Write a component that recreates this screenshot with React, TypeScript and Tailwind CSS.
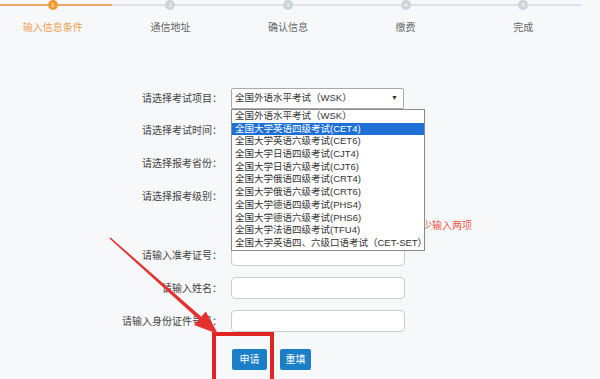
const font = { fontFamily: '"Liberation Sans", "Noto Sans CJK SC", sans-serif' };

const steps = ["输入信息条件", "通信地址", "确认信息", "缴费", "完成"];

const options = [
  "全国外语水平考试（WSK）",
  "全国大学英语四级考试(CET4)",
  "全国大学英语六级考试(CET6)",
  "全国大学日语四级考试(CJT4)",
  "全国大学日语六级考试(CJT6)",
  "全国大学俄语四级考试(CRT4)",
  "全国大学俄语六级考试(CRT6)",
  "全国大学德语四级考试(PHS4)",
  "全国大学德语六级考试(PHS6)",
  "全国大学法语四级考试(TFU4)",
  "全国大学英语四、六级口语考试（CET-SET）",
];

const Stepper = () => {
  return (
    <div className="-ml-[6px] w-[588px]">
      <div className="grid grid-cols-5">
        {steps.map((s, i) => (
          <div key={s} className="flex flex-col items-center">
            <div className="flex h-[10px] w-full items-center">
              <div className={`h-[1.5px] flex-1 ${i === 0 ? "bg-[#e9a868]" : "bg-[#dfe3e8]"}`} />
              <div
                className={`flex h-[10px] w-[10px] items-center justify-center rounded-full text-[6px] leading-none text-white ${
                  i === 0 ? "bg-[#f29a2e]" : "bg-[#cdd2d8]"
                }`}
              >
                {i + 1}
              </div>
              <div className={`h-[1.5px] flex-1 ${i === 0 ? "bg-[#e9a868]" : "bg-[#dfe3e8]"}`} />
            </div>
            <div className={`mt-[12px] text-[10px] leading-[12px] ${i === 0 ? "text-[#f0a050]" : "text-[#666]"}`}>
              {s}
            </div>
          </div>
        ))}
      </div>
    </div>
  );
};

const Label = ({ children }: { children: string }) => (
  <div className="w-[222px] shrink-0 text-right text-[10px] text-[#444]">{children}</div>
);

const Input = () => (
  <div className="ml-[9px] h-[22px] w-[174px] rounded-[4px] border border-[#c8ccd0] bg-white" />
);

const SelectBox = ({ text }: { text: string }) => (
  <div className="ml-[9px] flex h-[21px] w-[173px] items-center justify-between rounded-[2px] border border-[#a9a9a9] bg-white pl-[3px] pr-[5px] text-[9.5px] text-[#333]">
    <span>{text}</span>
    <span className="text-[7px]">▼</span>
  </div>
);

export default function App() {
  return (
    <div className="relative h-[379px] w-[600px] overflow-hidden bg-[#f6f8fa]" style={font}>
      <Stepper />

      <div className="mt-[54px] flex flex-col">
        {/* 考试项目 */}
        <div className="flex h-[21px] items-center">
          <Label>请选择考试项目：</Label>
          <div className="relative z-10">
            <SelectBox text="全国外语水平考试（WSK）" />
            <div className="absolute left-[9px] top-[21px] w-[194px] border border-[#8a8a8a] bg-white">
              {options.map((o, i) => (
                <div
                  key={o}
                  className={`h-[12.7px] pl-[3px] text-[9.5px] leading-[12.7px] whitespace-nowrap ${
                    i === 1 ? "bg-[#1e6fd6] text-white" : "text-[#333]"
                  }`}
                >
                  {o}
                </div>
              ))}
            </div>
          </div>
        </div>

        <div className="mt-[11px] flex h-[21px] items-center">
          <Label>请选择考试时间：</Label>
          <SelectBox text="" />
        </div>
        <div className="mt-[12px] flex h-[21px] items-center">
          <Label>请选择报考省份：</Label>
          <SelectBox text="" />
        </div>
        <div className="mt-[12px] flex h-[21px] items-center">
          <Label>请选择报考级别：</Label>
          <SelectBox text="" />
        </div>

        {/* hint */}
        <div className="mt-[8px] flex h-[21px] items-center">
          <div className="ml-[412px] text-[10px] text-[#e8594f]">至少输入两项</div>
        </div>

        <div className="mt-[8px] flex h-[22px] items-center">
          <Label>请输入准考证号：</Label>
          <Input />
        </div>
        <div className="mt-[11px] flex h-[22px] items-center">
          <Label>请输入姓名：</Label>
          <Input />
        </div>
        <div className="mt-[11px] flex h-[22px] items-center">
          <Label>请输入身份证件号码：</Label>
          <Input />
        </div>

        <div className="mt-[17px] flex h-[21px] items-center pl-[232px]">
          <button className="h-[21px] w-[35px] rounded-[2px] bg-[#1a7fc6] text-[10px] text-white">申请</button>
          <button className="ml-[13px] h-[21px] w-[31px] rounded-[2px] bg-[#1a7fc6] text-[10px] text-white">重填</button>
        </div>
      </div>

      {/* annotation: red box */}
      <div className="absolute left-[212px] top-[332px] h-[52px] w-[62px] border-[4px] border-[#e02424]" />

      {/* annotation: arrow */}
      <svg className="absolute left-0 top-0 z-20" width="600" height="379">
        <polygon points="110.5,237.4 202.2,317.6 199.8,320.4 109.5,238.6" fill="#e53030" />
        <polygon points="218,334 194,325.1 205.8,311.5" fill="#e53030" />
      </svg>
    </div>
  );
}
